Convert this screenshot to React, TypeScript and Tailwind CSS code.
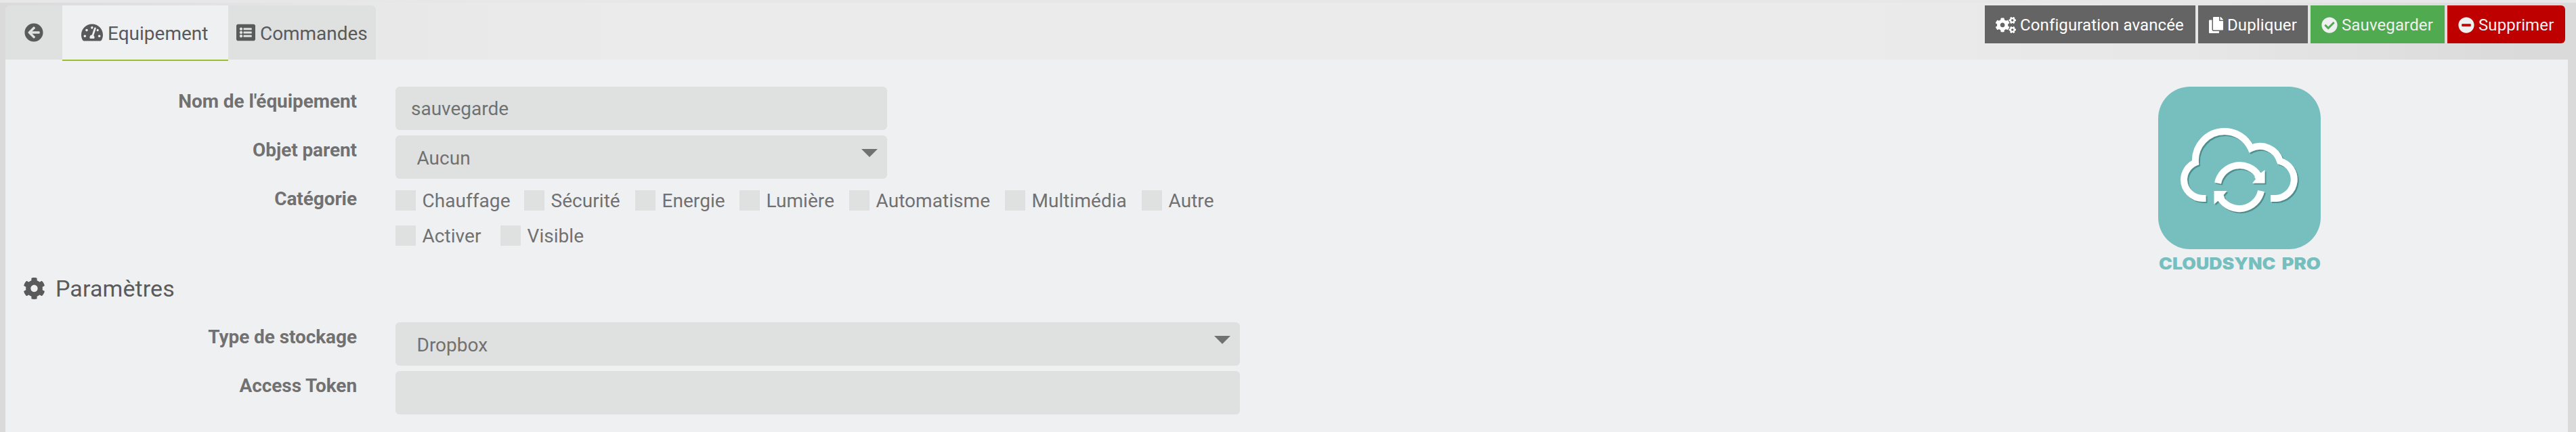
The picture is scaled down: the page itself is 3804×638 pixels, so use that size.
import { FaArrowCircleLeft, FaTachometerAlt, FaListAlt, FaCogs, FaCopy, FaCheckCircle, FaMinusCircle, FaCog } from "react-icons/fa";

function Check({ label, className }: { label: string; className: string }) {
  return (
    <label className={`flex h-[52px] shrink-0 items-center gap-[9.5px] ${className}`}>
      <span className="h-[30px] w-[30px] shrink-0 bg-[#dfe1e0]" />
      <span className="whitespace-nowrap pt-px tracking-[0.05px]">{label}</span>
    </label>
  );
}

function Caret() {
  return (
    <svg className="mt-5 h-3 w-6 shrink-0" viewBox="0 0 24 12">
      <path d="M0 0H24L12 12Z" fill="#717171" />
    </svg>
  );
}

function RowLabel({ children }: { children: string }) {
  return <div className="w-[527px] shrink-0 pt-[5px] text-right font-bold leading-[33px] tracking-[-0.08px]">{children}</div>;
}

function Logo() {
  return (
    <svg className="h-[300px] w-[300px]" viewBox="0 0 300 300">
      <defs>
        <filter id="shade" x="-10%" y="-10%" width="120%" height="120%">
          <feDropShadow dx="2" dy="2" stdDeviation="0.7" floodColor="#3f7f80" floodOpacity="0.75" />
        </filter>
      </defs>
      <rect x="27" y="18" width="240" height="240" rx="47" fill="#76bfbe" />
      <g filter="url(#shade)" fill="none" stroke="#fff" strokeWidth="10">
        <path d="M97.500 183H93A28 28 0 0 1 65 155A28 28 0 0 1 82 130A43 43 0 0 1 125 84A43 43 0 0 1 164 109A31 31 0 0 1 207 128A28 28 0 0 1 201 183H193" />
        <path d="M115 160.500A33 33 0 0 1 175 149" />
        <path d="M179 172A33 33 0 0 1 119 183" />
        <path d="M184.500 141V160.500H166L171 154.500L169 151L179 145Z" fill="#fff" stroke="none" />
        <path d="M109.500 191.500V172H128.500L123.500 178L125 182L115 187Z" fill="#fff" stroke="none" />
      </g>
      <g fill="#76bfbe" className="font-['Inter',sans-serif] text-[24px] font-black">
        <text x="28" y="288" textLength="172.500" lengthAdjust="spacingAndGlyphs">CLOUDSYNC</text>
        <text x="209.500" y="288" textLength="57.500" lengthAdjust="spacingAndGlyphs">PRO</text>
      </g>
    </svg>
  );
}

export default function App() {
  return (
    <div className="flex h-[638px] w-[3804px] flex-col overflow-hidden bg-[linear-gradient(90deg,#dadada_0%,#e8e8e8_14%,#ebebeb_25%,#ebebeb_72%,#e6e6e6_86%,#dadada_98%)] font-['Roboto',sans-serif] text-[28px] text-[#717171]">
      <div className="h-1 shrink-0 bg-[#e7e7ea]" />
      <header className="flex h-[84px] shrink-0 items-start justify-between pl-2 pr-4 pt-1">
        <nav className="flex h-20 overflow-hidden rounded-t-md bg-[#dfe1e0] text-[#5a5a5a]">
          <a className="flex w-[84px] items-center justify-center"><FaArrowCircleLeft className="size-7" /></a>
          <a className="flex w-[245px] items-center bg-[#eff0f2] pl-7">
            <FaTachometerAlt className="mr-[7px] size-8" /><span className="pt-[3px]">Equipement</span>
          </a>
          <a className="flex w-[218px] items-center pl-3">
            <FaListAlt className="mr-[7px] size-7" /><span className="pt-[3px] tracking-[-0.05px]">Commandes</span>
          </a>
        </nav>
        <div className="flex h-14 gap-1 text-[24px] tracking-[0.12px] text-white">
          <button className="flex w-[311px] items-center whitespace-nowrap bg-[#646464] pl-4 pt-[2px]"><FaCogs className="mr-[6px] h-6 w-[30px]" />Configuration avancée</button>
          <button className="flex w-[162px] items-center bg-[#646464] pl-4 pt-[2px]"><FaCopy className="mr-[6px] h-6 w-[21px]" />Dupliquer</button>
          <button className="flex w-[198px] items-center bg-[#50aa50] pl-4 pt-[2px] text-[#f0f0f0]"><FaCheckCircle className="mr-[6px] size-6" />Sauvegarder</button>
          <button className="flex w-[174px] items-center rounded-r-md bg-[#be0000] pl-4 pt-[2px] text-[#f0f0f0]"><FaMinusCircle className="mr-[6px] size-6" />Supprimer</button>
        </div>
      </header>

      <main className="mx-2 mr-3 flex grow flex-col bg-[#eff0f2]">
        <div className="h-[2px] shrink-0 pl-[84px]"><div className="h-[2px] w-[245px] bg-[#96c22f]" /></div>
        <div className="flex h-[290px] shrink-0 justify-between pt-5">
          <div className="-ml-2 flex flex-col pt-[18px]">
            <div className="flex h-[72px] gap-[57px]">
              <RowLabel>Nom de l'équipement</RowLabel>
              <div className="flex h-16 w-[726px] items-center rounded-md bg-[#dfe1e0] pl-[23px] pt-[2px]">sauvegarde</div>
            </div>
            <div className="flex h-[72px] gap-[57px]">
              <RowLabel>Objet parent</RowLabel>
              <div className="flex h-16 w-[726px] items-start justify-between rounded-md bg-[#dfe1e0] pl-[31.5px] pr-[14px]"><span className="leading-[67px]">Aucun</span><Caret /></div>
            </div>
            <div className="flex gap-[57px]">
              <RowLabel>Catégorie</RowLabel>
              <div className="-mt-[2px] flex flex-col">
                <div className="flex">
                  <Check label="Chauffage" className="w-[190px]" />
                  <Check label="Sécurité" className="w-[164px]" />
                  <Check label="Energie" className="w-[154px]" />
                  <Check label="Lumière" className="w-[162px]" />
                  <Check label="Automatisme" className="w-[230px]" />
                  <Check label="Multimédia" className="w-[202px]" />
                  <Check label="Autre" className="w-[120px]" />
                </div>
                <div className="flex">
                  <Check label="Activer" className="w-[155px]" />
                  <Check label="Visible" className="w-[155px]" />
                </div>
              </div>
            </div>
          </div>
          <div className="mr-[332px]"><Logo /></div>
        </div>

        <h2 className="flex h-[96px] shrink-0 items-start pl-[26px] pt-[25px] text-[#5a5a5a]">
          <FaCog className="mr-[15px] mt-1 h-[34px] w-[33px]" />
          <span className="text-[34px] leading-[42px] tracking-[0.1px]">Paramètres</span>
        </h2>
        <div className="-ml-2 flex flex-col">
          <div className="flex h-[72px] gap-[57px]">
            <RowLabel>Type de stockage</RowLabel>
            <div className="flex h-16 w-[1247px] items-start justify-between rounded-md bg-[#dfe1e0] pl-[31.5px] pr-[14px]"><span className="leading-[67px]">Dropbox</span><Caret /></div>
          </div>
          <div className="flex h-[72px] gap-[57px]">
            <RowLabel>Access Token</RowLabel>
            <div className="h-16 w-[1247px] rounded-md bg-[#dfe1e0]" />
          </div>
        </div>
      </main>
    </div>
  );
}
